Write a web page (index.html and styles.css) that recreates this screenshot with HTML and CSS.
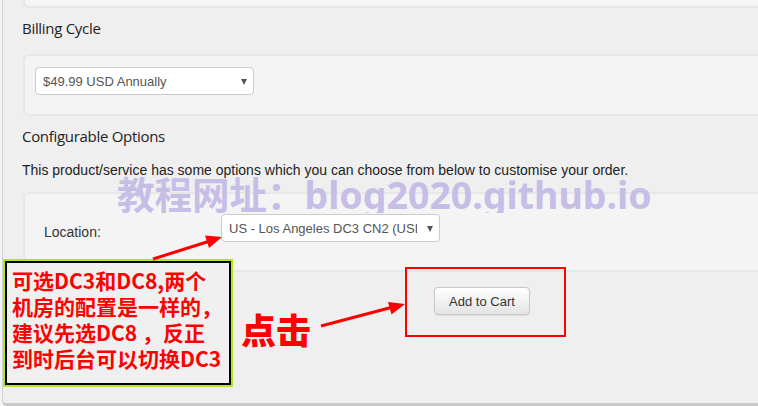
FILE: index.html
```html
<!DOCTYPE html>
<html lang="zh-CN">
<head>
<meta charset="utf-8">
<title>Configure</title>
<link rel="stylesheet" href="styles.css">
</head>
<body>
<div class="page">
  <div class="panel">
    <div class="card card-top"></div>
    <h3 class="heading">Billing Cycle</h3>
    <div class="card card-billing">
      <div class="select"><span class="sel-text">$49.99 USD Annually</span><span class="caret"></span></div>
    </div>
    <h3 class="heading heading-2">Configurable Options</h3>
    <p class="desc">This product/service has some options which you can choose from below to customise your order.</p>
    <div class="card card-options">
      <div class="opt-row">
        <span class="opt-label">Location:</span>
        <div class="select"><span class="sel-text">US - Los Angeles DC3 CN2 (USD $49.99 Annually)</span><span class="caret"></span></div>
      </div>
    </div>
    <div class="actions"><button class="btn" type="button">Add to Cart</button></div>
  </div>

  <div class="watermark"><span>教程网址：blog2020.github.io</span></div>

  <div class="note">
    <div class="note-inner">可选DC3和DC8,两个<br>机房的配置是一样的，<br>建议先选DC8 ，反正<br>到时后台可以切换DC3</div>
  </div>

  <div class="click-label">点击</div>
  <div class="highlight"></div>

  <svg class="arrows" width="758" height="406" viewBox="0 0 758 406">
    <line x1="153" y1="259" x2="210" y2="241" stroke="#ff0000" stroke-width="3"/>
    <polygon points="222,237 205,235.5 209,248" fill="#ff0000"/>
    <line x1="321" y1="326" x2="393" y2="307" stroke="#ff0000" stroke-width="3"/>
    <polygon points="405,304 388,302 391.5,314.5" fill="#ff0000"/>
  </svg>
</div>
</body>
</html>
```
FILE: styles.css
```css
html, body {
  margin: 0;
  padding: 0;
}
body {
  width: 758px;
  height: 406px;
  overflow: hidden;
  background: #f2f3f5;
  font-family: "Liberation Sans", Arial, sans-serif;
}
.page {
  position: relative;
  width: 758px;
  height: 406px;
  overflow: hidden;
}
.panel {
  margin-left: 2px;
  width: 820px;
  height: 403px;
  background: #efefef;
  border-left: 1px solid #cfd3d7;
  border-bottom: 3px solid #c9c9c9;
  border-bottom-left-radius: 5px;
  display: flex;
  flex-direction: column;
  align-items: flex-start;
}
.card {
  margin-left: 20px;
  width: 790px;
  background: #f4f4f4;
  border: 2px solid #e7e7e7;
  border-radius: 6px;
  box-sizing: border-box;
}
.card-top {
  height: 8px;
  border-top: none;
  border-top-left-radius: 0;
  border-top-right-radius: 0;
  background: #f5f6f8;
}
.heading {
  margin: 10px 0 0 19px;
  font-family: "Open Sans", sans-serif;
  font-weight: 400;
  font-size: 15px;
  line-height: 20px;
  letter-spacing: -0.3px;
  color: #222;
}
.heading-2 {
  margin-top: 10px;
}
.card-billing {
  margin-top: 16px;
  padding: 11px 0 19px 10px;
}
.select {
  width: 219px;
  height: 28px;
  box-sizing: border-box;
  background: #fff;
  border: 1px solid #cccccc;
  border-radius: 4px;
  display: flex;
  align-items: center;
  padding: 0 6px 0 7px;
  font-size: 13px;
  color: #555;
}
.sel-text {
  flex: 1;
  overflow: hidden;
  white-space: nowrap;
  margin-right: 10px;
}
.caret {
  width: 0;
  height: 0;
  border-left: 3px solid transparent;
  border-right: 3px solid transparent;
  border-top: 6px solid #555;
  margin-top: 1px;
}
.desc {
  margin: 15px 0 0 19px;
  font-size: 14px;
  line-height: 18px;
  color: #222;
}
.card-options {
  margin-top: 13px;
  padding: 20px 0 28px 19px;
}
.opt-row {
  display: flex;
  align-items: center;
}
.opt-label {
  width: 177px;
  font-size: 14px;
  color: #333;
  margin-top: 8px;
}
.actions {
  margin: 15px 0 0 431px;
}
.btn {
  width: 96px;
  height: 28px;
  padding: 0;
  font-family: "Liberation Sans", Arial, sans-serif;
  font-size: 13px;
  color: #333;
  background: linear-gradient(#ffffff, #e4e4e4);
  border: 1px solid #c8c8c8;
  border-radius: 4px;
  box-shadow: 0 1px 1px rgba(0, 0, 0, 0.08);
}
.watermark {
  position: absolute;
  left: 117px;
  top: 176px;
  height: 37px;
  overflow: hidden;
  font-family: "Noto Sans", "Noto Sans CJK SC", sans-serif;
  font-weight: 700;
  font-size: 37.5px;
  line-height: 37px;
  color: #c7bee7;
  white-space: nowrap;
}
.note {
  position: absolute;
  left: 3px;
  top: 259px;
  width: 230px;
  height: 128px;
  box-sizing: border-box;
  border: 2px solid #b5e61d;
}
.note-inner {
  height: 100%;
  box-sizing: border-box;
  border: 2px solid #000;
  background: #f0f0f0;
  padding: 4px 0 0 5px;
  font-family: "Noto Sans CJK SC", sans-serif;
  font-weight: 700;
  font-size: 21px;
  line-height: 26px;
  color: #ff0000;
  white-space: nowrap;
}
.click-label {
  position: absolute;
  left: 241px;
  top: 311px;
  font-family: "Noto Sans CJK SC", sans-serif;
  font-weight: 900;
  font-size: 35px;
  line-height: 36px;
  color: #ff0000;
}
.highlight {
  position: absolute;
  left: 405px;
  top: 267px;
  width: 161px;
  height: 70px;
  box-sizing: border-box;
  border: 2px solid #ff0000;
}
.arrows {
  position: absolute;
  left: 0;
  top: 0;
  pointer-events: none;
}
```
